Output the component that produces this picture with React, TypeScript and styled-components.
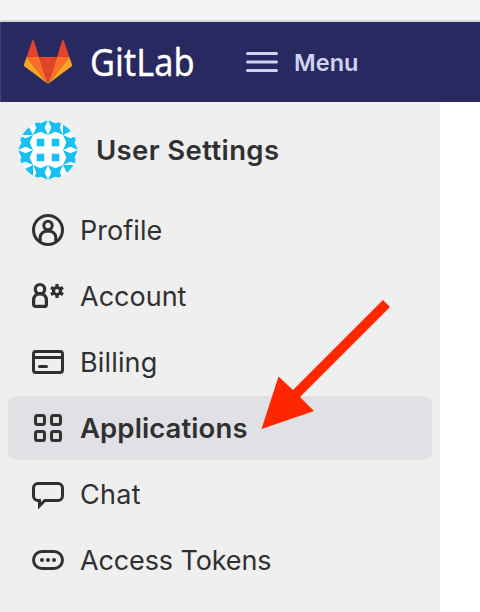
import React from "react";
import styled, { createGlobalStyle } from "styled-components";

const GlobalStyle = createGlobalStyle`
  * { box-sizing: border-box; }
  html, body { margin: 0; background: #fff; }
  body { font-family: Inter, "Liberation Sans", sans-serif; overflow: hidden; }
  svg { display: block; flex: none; }
`;

const Page = styled.div`
  position: relative;
  display: flex;
  flex-direction: column;
  width: 480px;
  height: 612px;
  overflow: hidden;
`;

const BrowserEdge = styled.div`
  flex: none;
  height: 22px;
  background: #f3f3f3;
  border-bottom: 2px solid #d3d7da;
`;

const Navbar = styled.header`
  flex: none;
  display: flex;
  align-items: center;
  height: 80px;
  padding-left: 23px;
  border-left: 1px solid #40406f;
  background: #292961;
`;

const Brand = styled.span`
  width: 104px;
  margin-left: 18px;
  font: 400 37.5px/50px "Noto Sans", sans-serif;
  white-space: nowrap;
  color: #fff;
  -webkit-text-stroke: 0.3px #fff;
  transform: scaleX(0.915);
  transform-origin: left;
`;

const MenuButton = styled.button`
  display: flex;
  align-items: center;
  gap: 16px;
  margin-left: 52px;
  padding: 0;
  border: 0;
  background: none;
  color: #d1d1f0;
  font: 600 23.5px/32px Inter, sans-serif;
`;

const MenuText = styled.span`
  padding-top: 2px;
  letter-spacing: 0.05px;
`;

const Sidebar = styled.aside`
  flex: 1;
  width: 440px;
  padding: 16px 8px;
  background: #efefef;
`;

const Context = styled.div`
  display: flex;
  align-items: center;
  gap: 18px;
  height: 64px;
  padding-left: 10px;
  color: #303030;
  font-size: 27.5px;
  font-weight: 600;
`;

const List = styled.nav`
  display: flex;
  flex-direction: column;
  gap: 2px;
  margin-top: 16px;
`;

const Item = styled.a<{ $active?: boolean }>`
  display: flex;
  align-items: center;
  gap: 16px;
  height: 64px;
  padding-left: 24px;
  border-radius: 8px;
  background: ${(p) => (p.$active ? "#e1e0e5" : "transparent")};
  color: #303030;
  font-size: ${(p) => (p.$active ? 27.5 : 27)}px;
  font-weight: ${(p) => (p.$active ? 600 : 400)};
`;

const Label = styled.span<{ $tracking: number }>`
  letter-spacing: ${(p) => p.$tracking}px;
  white-space: nowrap;
`;

const Arrow = styled.svg`
  position: absolute;
  left: 260px;
  top: 298px;
`;

const Logo = () => (
  <svg width="48" height="44" viewBox="0 0 48 44">
    <path d="M8.2 .5Q9 -.5 9.8 .5L15 17H2.6ZM38.2 .5Q39 -.5 39.8 .5L45.4 17H33Z" fill="#e24329" />
    <path d="M15 17H33L24 44Z" fill="#e24329" />
    <path d="M2.6 17H15L24 44ZM45.4 17H33L24 44Z" fill="#fc6d26" />
    <path d="M2.6 17 0 24.5V26L24 44ZM45.4 17 48 24.5V26L24 44Z" fill="#fca326" />
  </svg>
);

const STAR = "l7.5 3.3 7.5-3.3-3.3 7.5 3.3 7.5-7.5-3.3-7.5 3.3 3.3-7.5Z";
const stars = [[15, 0], [30, 0], [0, 15], [45, 15], [0, 30], [45, 30], [15, 45], [30, 45]];
const squares = [[18.75, 18.75], [33.75, 18.75], [18.75, 33.75], [33.75, 33.75]];

const Avatar = () => (
  <svg width="60" height="60" viewBox="0 0 60 60">
    <clipPath id="round"><circle cx="30" cy="30" r="29.6" /></clipPath>
    <circle cx="30" cy="30" r="30" fill="#e8e8e8" />
    <g clipPath="url(#round)">
      <path d="M0 0H60V60H0Z" fill="#fff" />
      <g fill="#16c0f3">
        {stars.map(([x, y]) => <path key={`${x}-${y}`} d={`M${x} ${y}${STAR}`} />)}
        {squares.map(([x, y]) => <rect key={`${x}-${y}`} x={x} y={y} width="7.5" height="7.5" />)}
        <path d="M7.5 0 15 15H0ZM60 7.5 45 15V0ZM52.5 60 45 45H60ZM0 52.5 15 45V60Z" />
      </g>
    </g>
  </svg>
);

const Icon = ({ children }: { children: React.ReactNode }) => (
  <svg width="32" height="32" viewBox="0 0 16 16" fill="none" stroke="currentColor" strokeWidth="1.5">
    {children}
  </svg>
);

const items = [
  {
    label: "Profile", tracking: 0.05,
    icon: <><circle cx="8" cy="8" r="7.25" /><circle cx="8" cy="5.75" r="2.1" /><path d="M4.1 13.8V11.8A3.15 3.15 0 0 1 7.25 8.65H8.75A3.15 3.15 0 0 1 11.9 11.8V13.8" /></>,
  },
  {
    label: "Account", tracking: 0,
    icon: <>
      <circle cx="4" cy="4.6" r="2.35" strokeWidth="1.6" />
      <path d="M.8 9.9A3.2 3.1 0 0 1 7.2 9.9V12.2A1 1 0 0 1 6.2 13.2H1.8A1 1 0 0 1 .8 12.2Z" strokeWidth="1.6" />
      <circle cx="12.5" cy="5.5" r="1.75" strokeWidth="1.6" />
      <path d="M12.5 2V3.7M12.5 7.3V9M9.47 3.75 10.94 4.6M14.06 6.4 15.53 7.25M9.47 7.25 10.94 6.4M14.06 4.6 15.53 3.75" strokeWidth="1.6" />
    </>,
  },
  {
    label: "Billing", tracking: 0.15,
    icon: <><rect x=".75" y="2.75" width="14.5" height="10.5" rx="1.2" /><path d="M1 5.75H15" /><path d="M3.75 10.25H7.25" strokeLinecap="round" /></>,
  },
  {
    label: "Applications", tracking: 0.1, active: true,
    icon: <><rect x="1.75" y="1.75" width="4.5" height="4.5" rx="1" /><rect x="9.75" y="1.75" width="4.5" height="4.5" rx="1" /><rect x="1.75" y="9.75" width="4.5" height="4.5" rx="1" /><rect x="9.75" y="9.75" width="4.5" height="4.5" rx="1" /></>,
  },
  {
    label: "Chat", tracking: 0.3,
    icon: <path d="M3.75 13.9V11.25H3A2.25 2.25 0 0 1 .75 9V5A2.25 2.25 0 0 1 3 2.75H13A2.25 2.25 0 0 1 15.25 5V9A2.25 2.25 0 0 1 13 11.25H6.4Z" />,
  },
  {
    label: "Access Tokens", tracking: -0.12,
    icon: <><rect x=".75" y="3.75" width="14.5" height="8.5" rx="4.25" /><g fill="currentColor" stroke="none"><circle cx="5" cy="8" r="1" /><circle cx="8" cy="8" r="1" /><circle cx="11" cy="8" r="1" /></g></>,
  },
];

export default function App() {
  return (
    <>
      <GlobalStyle />
      <Page>
        <BrowserEdge />
        <Navbar>
          <Logo />
          <Brand>GitLab</Brand>
          <MenuButton>
            <svg width="32" height="20" viewBox="0 0 32 20" stroke="currentColor" strokeWidth="3" strokeLinecap="round">
              <path d="M1.5 1.5H30.5M1.5 10H30.5M1.5 18.5H30.5" />
            </svg>
            <MenuText>Menu</MenuText>
          </MenuButton>
        </Navbar>
        <Sidebar>
          <Context><Avatar /><Label $tracking={0.38}>User Settings</Label></Context>
          <List>
            {items.map((it) => (
              <Item key={it.label} $active={it.active}>
                <Icon>{it.icon}</Icon>
                <Label $tracking={it.tracking}>{it.label}</Label>
              </Item>
            ))}
          </List>
        </Sidebar>
        <Arrow width="132" height="134" viewBox="0 0 132 134" fill="#ff2600">
          <path d="M123 2 130 9 40 99 54 113 1.5 131 18.5 78.5 33 92Z" />
        </Arrow>
      </Page>
    </>
  );
}
